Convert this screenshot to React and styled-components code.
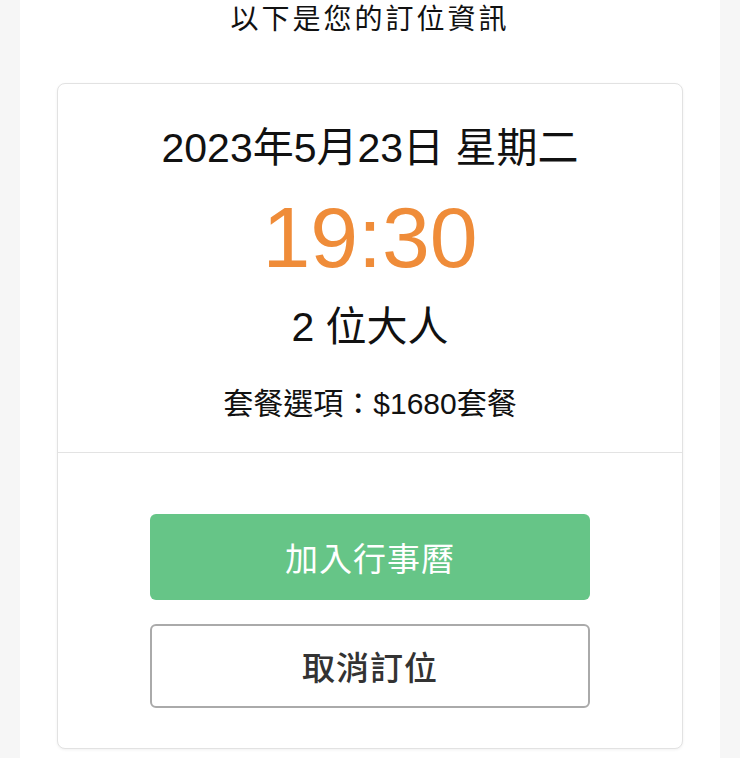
import React from 'react';
import styled, { createGlobalStyle } from 'styled-components';

const GlobalStyle = createGlobalStyle`
  body {
    margin: 0;
    background: #f6f6f6;
    font-family: 'Liberation Sans', 'Noto Sans CJK TC', sans-serif;
    color: #111;
  }
`;

const Page = styled.div`
  width: 700px;
  min-height: 758px;
  margin: 0 auto;
  background: #fff;
  overflow: hidden;
`;

const Title = styled.h1`
  margin: 0;
  font-size: 28px;
  font-weight: 400;
  line-height: 40px;
  letter-spacing: 3px;
  text-align: center;
`;

const Card = styled.section`
  margin: 43px 37px 0;
  border: 1px solid #e2e2e2;
  border-radius: 8px;
  box-shadow: 0 1px 3px rgba(0, 0, 0, 0.06);
  background: #fff;
`;

const Info = styled.div`
  display: flex;
  flex-direction: column;
  align-items: center;
  padding: 40px 20px 28px;
  border-bottom: 1px solid #e3e3e3;
`;

const Line = styled.div`
  font-size: ${({ size }) => size}px;
  line-height: ${({ lh }) => lh}px;
  margin-top: ${({ gap }) => gap || 0}px;
  color: ${({ color }) => color || '#111'};
  white-space: pre;
`;

const Actions = styled.div`
  display: flex;
  flex-direction: column;
  gap: 24px;
  padding: 61px 92px 40px;
`;

const Button = styled.button`
  display: flex;
  align-items: center;
  justify-content: center;
  height: ${({ primary }) => (primary ? 86 : 84)}px;
  border-radius: 6px;
  font-family: 'Noto Sans CJK TC', sans-serif;
  font-size: 33px;
  letter-spacing: 1px;
  cursor: pointer;
  background: ${({ primary }) => (primary ? '#66c587' : '#fff')};
  color: ${({ primary }) => (primary ? '#fff' : '#333')};
  font-weight: ${({ primary }) => (primary ? 400 : 500)};
  border: ${({ primary }) => (primary ? 'none' : '2px solid #aaa')};
`;

const App = () => {
  return (
    <>
      <GlobalStyle />
      <Page>
        <Title>以下是您的訂位資訊</Title>
        <Card>
          <Info>
            <Line size={41} lh={48}>2023年5月23日 星期二</Line>
            <Line size={86} lh={100} gap={15} color="#ef8c39">19:30</Line>
            <Line size={41} lh={48} gap={16}>2 位大人</Line>
            <Line size={30} lh={40} gap={33}>套餐選項：$1680套餐</Line>
          </Info>
          <Actions>
            <Button primary>加入行事曆</Button>
            <Button>取消訂位</Button>
          </Actions>
        </Card>
      </Page>
    </>
  );
};

export default App;
